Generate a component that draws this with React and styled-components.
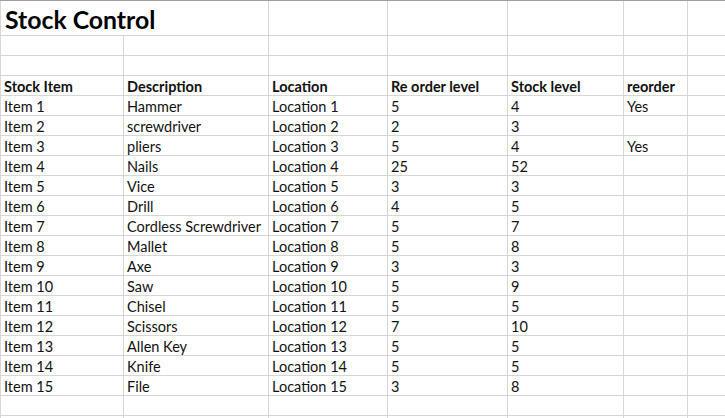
import React from "react";
import styled, { createGlobalStyle } from "styled-components";

const Global = createGlobalStyle`
  html, body { margin: 0; padding: 0; background: #ffffff; }
  body { font-family: Lato, "Open Sans", sans-serif; color: #111; overflow: hidden; }
`;

const Sheet = styled.div`
  width: 725px;
  height: 418px;
  overflow: hidden;
  border-top: 1px solid #9e9e9e;
  box-sizing: border-box;
`;

const Grid = styled.div`
  display: grid;
  grid-template-columns: 123px 145px 119px 120px 116px 64px 80px;
  grid-auto-rows: 20px;
  grid-template-rows: 35px;
  border-left: 1px solid #d6d6d6;
`;

const Cell = styled.div`
  box-sizing: border-box;
  border-right: 1px solid #d6d6d6;
  border-bottom: 1px solid #d6d6d6;
  display: flex;
  align-items: flex-end;
  padding: 0 0 0 3px;
  font-size: 14.5px;
  line-height: 17px;
  white-space: nowrap;
  overflow: hidden;
  font-weight: ${(p) => (p.$bold ? 700 : 400)};
  grid-column: ${(p) => (p.$span ? `span ${p.$span}` : "auto")};
`;

const Title = styled(Cell)`
  font-size: 24.8px;
  line-height: 30px;
  font-weight: 700;
  padding: 0 0 0 4px;
  color: #000;
`;

const headers = ["Stock Item", "Description", "Location", "Re order level", "Stock level", "reorder", ""];

const items = [
  ["Hammer", 5, 4, "Yes"],
  ["screwdriver", 2, 3, ""],
  ["pliers", 5, 4, "Yes"],
  ["Nails", 25, 52, ""],
  ["Vice", 3, 3, ""],
  ["Drill", 4, 5, ""],
  ["Cordless Screwdriver", 5, 7, ""],
  ["Mallet", 5, 8, ""],
  ["Axe", 3, 3, ""],
  ["Saw", 5, 9, ""],
  ["Chisel", 5, 5, ""],
  ["Scissors", 7, 10, ""],
  ["Allen Key", 5, 5, ""],
  ["Knife", 5, 5, ""],
  ["File", 3, 8, ""],
];

const emptyRow = (key) =>
  Array.from({ length: 7 }, (_, i) => <Cell key={`${key}-${i}`} />);

export default function App() {
  return (
    <>
      <Global />
      <Sheet>
        <Grid>
          <Title $span={2}>Stock Control</Title>
          {Array.from({ length: 5 }, (_, i) => (
            <Cell key={`t-${i}`} />
          ))}
          {emptyRow("r2")}
          {emptyRow("r3")}
          {headers.map((h, i) => (
            <Cell key={`h-${i}`} $bold>
              {h}
            </Cell>
          ))}
          {items.map(([desc, re, stock, ro], i) => (
            <React.Fragment key={i}>
              <Cell>Item {i + 1}</Cell>
              <Cell>{desc}</Cell>
              <Cell>Location {i + 1}</Cell>
              <Cell>{re}</Cell>
              <Cell>{stock}</Cell>
              <Cell>{ro}</Cell>
              <Cell />
            </React.Fragment>
          ))}
          {emptyRow("r20")}
          {emptyRow("r21")}
        </Grid>
      </Sheet>
    </>
  );
}
